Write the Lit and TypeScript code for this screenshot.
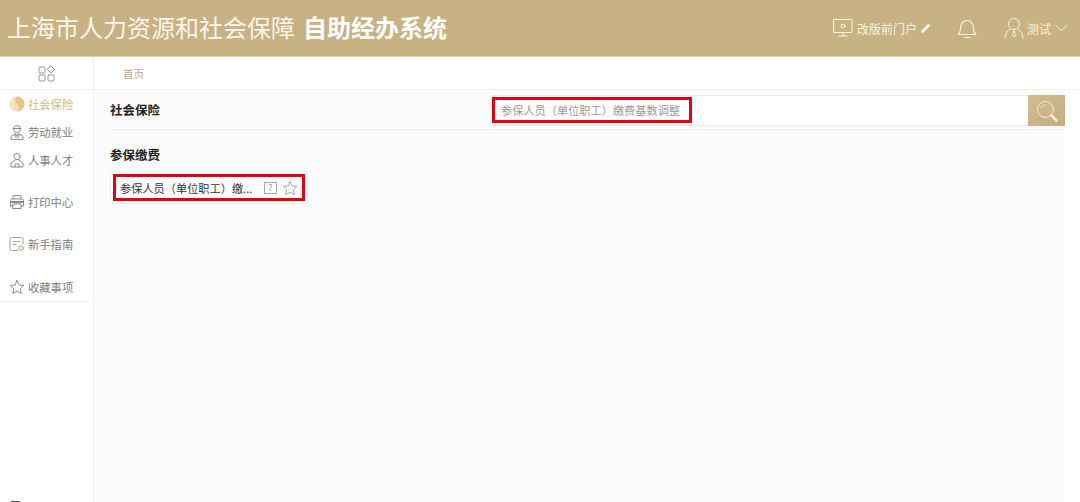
import { LitElement, html, css, svg } from "lit";
import { customElement } from "lit/decorators.js";

const ic = (w: number, h: number, vb: string, c: string, body: unknown, sw = 1) => html`<svg
  width=${w} height=${h} viewBox=${vb} fill="none" stroke=${c} stroke-width=${sw} stroke-linecap="round" stroke-linejoin="round">${body}</svg>`;

const star = svg`<path d="M8 1.500l2 4.400 4.800.6-3.500 3.300.9 4.700L8 12.200l-4.200 2.300.9-4.700L1.200 6.500l4.800-.6z"/>`;

const sideItems: { label: string; icon: unknown; cls: string }[] = [
  {
    label: "社会保险", cls: "first",
    icon: html`<svg width="16" height="16" viewBox="0 0 16 16"><circle cx="8" cy="8" r="7.500" fill="#f6dfb6"/><path d="M8 .5a7.500 7.500 0 0 1 0 15c2.500-2 2.500-5 0-7.500-2.500-2.500-2.500-5.500 0-7.500z" fill="#eec184"/><path d="M3.500 3.500c1.500 2.500 1 6-.5 9" stroke="#fff" stroke-width=".7" fill="none"/></svg>`,
  },
  {
    label: "劳动就业", cls: "",
    icon: ic(16, 16, "0 0 16 16", "#8b8b8b", svg`<circle cx="8" cy="5" r="3.500"/><path d="M4 4.500h8M6 9v2h4V9M2 15v-2c0-1.200 1-2 2-2h8c1 0 2 .8 2 2v2zM6 13h4"/>`),
  },
  {
    label: "人事人才", cls: "gap",
    icon: ic(16, 16, "0 0 16 16", "#8b8b8b", svg`<circle cx="8" cy="4.500" r="3.200"/><path d="M6.500 8L2 11v4h12v-4L9.500 8M6 15v-3h4v3"/>`),
  },
  {
    label: "打印中心", cls: "gap",
    icon: ic(16, 16, "0 0 16 16", "#8b8b8b", svg`<path d="M4 5V1.500h8V5M1.500 12V6.500c0-1 .5-1.500 1.500-1.500h10c1 0 1.500.5 1.500 1.500V12H12M4 12H1.500M4 10h8v4.500H4z"/><path d="M2 8h12" stroke-width="2"/>`),
  },
  {
    label: "新手指南", cls: "gap wide",
    icon: ic(16, 16, "0 0 16 16", "#a0a0a0", svg`<path d="M14 8V3c0-1-.5-1.500-1.500-1.500h-10C1.500 1.500 1 2 1 3v10c0 1 .5 1.500 1.500 1.500H9M4 5.500h7M4 8.500h3"/><circle cx="12" cy="12" r="2.200"/>`),
  },
  {
    label: "收藏事项", cls: "",
    icon: ic(16, 16, "0 0 16 16", "#8b8b8b", star),
  },
];

@customElement("app-root")
export class AppRoot extends LitElement {
  static styles = css`
    :host { display: block; width: 1080px; height: 502px; overflow: hidden; font-family: "Noto Sans CJK SC", "Liberation Sans", sans-serif; background: #fff; position: relative; }
    * { box-sizing: border-box; }
    .head { height: 57px; background: #c8b183; display: flex; align-items: center; padding: 0 12px 0 7px; color: #fff; border-bottom: 1px solid #d9ccb3; }
    .title { font-size: 24px; line-height: 52px; padding-bottom: 3px; white-space: nowrap; color: #fbf6ec; }
    .title b { margin-left: 8px; font-weight: 700; color: #fff; }
    .tools { margin-left: auto; display: flex; align-items: center; color: #fdf3de; font-size: 12px; }
    .portal { display: flex; align-items: center; gap: 4px; margin-right: 27px; }
    .bell { display: flex; margin-right: 27px; }
    .user { display: flex; align-items: center; gap: 3px; }
    .user svg:last-child { margin-left: 1px; }
    .body { display: flex; height: 445px; }
    .side { width: 94px; flex: none; border-right: 1px solid #f0f0f2; display: flex; flex-direction: column; background: #fff; position: relative; }
    .side-top { height: 33px; display: flex; align-items: center; justify-content: center; border-bottom: 1px solid #f0f0f2; }
    .menu { display: flex; flex-direction: column; border-bottom: 1px solid #f3f3f4; }
    .row { height: 28px; display: flex; align-items: center; gap: 3px; padding-left: 9px; font-size: 11.300px; color: #7c7c7c; white-space: nowrap; }
    .row.first { color: #cdb78c; }
    .row.gap { margin-bottom: 14px; }
    .row.wide { margin-bottom: 15px; }
    .dot { position: absolute; left: 11px; bottom: 0; width: 9px; height: 1px; background: #555; }
    .main { flex: 1; display: flex; flex-direction: column; min-width: 0; }
    .crumb { height: 33px; display: flex; align-items: center; padding-left: 29px; font-size: 10.500px; color: #bda987; border-bottom: 1px solid #f0f0f2; flex: none; }
    .panel { flex: 1; background: #fff; }
    .content { width: 970px; height: 100%; background: #fbfbfc; padding: 0 0 0 16px; }
    .bar { height: 40px; display: flex; align-items: center; border-bottom: 1px solid #eeeeef; }
    .bar h2, .sec { margin: 0; font-size: 12.500px; font-weight: 700; color: #222; }
    .search { position: absolute; left: 492px; top: 95px; width: 573px; height: 31px; display: flex; }
    .field { flex: 1; background: #fff; border: 1px solid #e7e7e7; border-right: 0; }
    .mark { width: 200px; height: 26px; margin: 1px 0 0 -1px; border: 3px solid #e60012; display: flex; align-items: center; padding-left: 6px; font-size: 11.200px; color: #9a9a9a; white-space: nowrap; overflow: hidden; }
    .go { width: 37px; background: linear-gradient(135deg, #d1bb90, #c6ae80); display: flex; align-items: center; justify-content: center; }
    .sec { margin-top: 17px; line-height: 16px; }
    .card { margin-top: 8px; width: 198px; height: 33px; padding: 2px; background: #fff; border: 1px solid #f0f0f0; }
    .card-in { height: 27px; border: 3px solid #e60012; display: flex; align-items: center; padding: 0 4px; font-size: 11.200px; color: #333; white-space: nowrap; }
    .card-text { flex: 1; }
    .q { width: 13px; height: 12px; border: 1px solid #a9a9a9; font-size: 9px; line-height: 10px; text-align: center; color: #9a9a9a; margin-right: 5px; }
  `;

  render() {
    return html`
      <div class="head">
        <div class="title">上海市人力资源和社会保障<b>自助经办系统</b></div>
        <div class="tools">
          <div class="portal">
            ${ic(20, 20, "0 0 20 20", "#fdf3de", svg`<rect x="1" y="1.500" width="18" height="13"/><circle cx="10" cy="8" r="2"/><path d="M10 14.500v3M6 18h8"/>`)}
            <span>改版前门户</span>
            ${ic(9, 9, "0 0 9 9", "#fff", svg`<path d="M1.500 7.500l6-6" stroke-width="2.500"/>`)}
          </div>
          <div class="bell">
            ${ic(20, 21, "0 0 20 21", "#fdf3de", svg`<path d="M1 16.500c2-1.500 2.500-3 2.500-7 0-4 3-7 6.500-7s6.500 3 6.500 7c0 4 .5 5.500 2.500 7z"/><path d="M7 19.500h6"/>`, 1.2)}
          </div>
          <div class="user">
            ${ic(20, 22, "0 0 20 22", "#fdf3de", svg`<circle cx="10" cy="7" r="5.500"/><path d="M6 12c-3 2-5 5-5 9M14 12c3 2 5 5 5 9M10 14l-1.500 4 1.500 2 1.500-2z"/>`)}
            <span>测试</span>
            ${ic(13, 8, "0 0 13 8", "#fdf3de", svg`<path d="M1 1.500l5.500 5 5.500-5"/>`)}
          </div>
        </div>
      </div>
      <div class="body">
        <aside class="side">
          <div class="side-top">
            ${ic(17, 17, "0 0 17 17", "#9a9aa0", svg`<rect x="1" y="2" width="6" height="6" rx="1"/><rect x="1" y="10" width="6" height="6" rx="1"/><rect x="10" y="10" width="6" height="6" rx="1"/><path d="M13 1l3.500 3.500L13 8 9.500 4.500z"/>`)}
          </div>
          <div class="menu">
            ${sideItems.map((i) => html`<div class="row ${i.cls}">${i.icon}<span>${i.label}</span></div>`)}
          </div>
          <div class="dot"></div>
        </aside>
        <div class="main">
          <div class="crumb">首页</div>
          <div class="panel">
            <div class="content">
              <div class="bar"><h2>社会保险</h2></div>
              <div class="sec">参保缴费</div>
              <div class="card">
                <div class="card-in">
                  <span class="card-text">参保人员（单位职工）缴...</span>
                  <span class="q">?</span>
                  ${ic(16, 16, "0 0 16 16", "#a9a9a9", star)}
                </div>
              </div>
            </div>
          </div>
        </div>
      </div>
      <div class="search">
        <div class="field"><div class="mark">参保人员（单位职工）缴费基数调整</div></div>
        <div class="go">
          ${ic(24, 24, "0 0 24 24", "#f7efdf", svg`<circle cx="10.500" cy="10.500" r="8"/><path d="M16.500 16.500l5 5" stroke-width="2.500"/><path d="M6 9c.5-1.500 2-3 4-3"/>`)}
        </div>
      </div>
    `;
  }
}
